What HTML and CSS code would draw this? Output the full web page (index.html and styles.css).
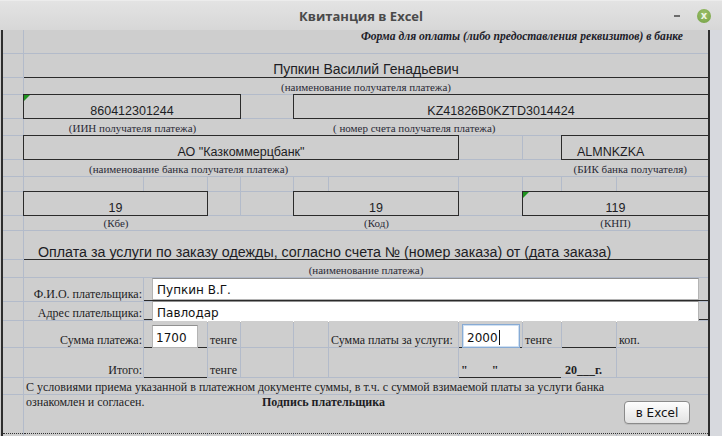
FILE: index.html
```html
<!DOCTYPE html>
<html lang="ru">
<head>
<meta charset="utf-8">
<title>Квитанция в Excel</title>
<link rel="stylesheet" href="styles.css">
</head>
<body>
<div class="window">
  <header class="titlebar">
    <span></span>
    <h1 class="title">Квитанция в Excel</h1>
    <div class="controls">
      <span class="minimize"></span>
      <span class="close">x</span>
    </div>
  </header>
  <div class="content">
    <div class="sheet">
      <!-- A -->
      <div class="c"></div>
      <div class="c s10 note">Форма для оплаты (либо предоставления реквизитов) в банке</div>
      <!-- B -->
      <div class="c"></div>
      <div class="c s10 name ul">Пупкин Василий Генадьевич</div>
      <!-- C -->
      <div class="c"></div>
      <div class="c s10 small center">(наименование получателя платежа)</div>
      <!-- D -->
      <div class="c"></div>
      <div class="c s3 box mark">860412301244</div>
      <div class="c"></div>
      <div class="c s6 box">KZ41826B0KZTD3014424</div>
      <!-- E -->
      <div class="c"></div>
      <div class="c s3 small center mr">(ИИН получателя платежа)</div>
      <div class="c s7 small acct">( номер счета получателя платежа)</div>
      <!-- F -->
      <div class="c"></div>
      <div class="c s6 box">АО "Казкоммерцбанк"</div>
      <div class="c"></div>
      <div class="c"></div>
      <div class="c s2 box bik">ALMNKZKA</div>
      <!-- G -->
      <div class="c"></div>
      <div class="c s8 small bank mr">(наименование банка получателя платежа)</div>
      <div class="c s2 small bik-label">(БИК банка получателя)</div>
      <!-- H -->
      <div class="c"></div><div class="c"></div><div class="c"></div><div class="c"></div>
      <div class="c"></div><div class="c"></div><div class="c"></div><div class="c"></div>
      <div class="c"></div><div class="c"></div><div class="c"></div>
      <!-- I -->
      <div class="c"></div>
      <div class="c s2 box">19</div>
      <div class="c"></div>
      <div class="c"></div>
      <div class="c s2 box">19</div>
      <div class="c"></div>
      <div class="c s3 box mark">119</div>
      <!-- J -->
      <div class="c"></div>
      <div class="c s2 small center mr">(Кбе)</div>
      <div class="c s2 mr"></div>
      <div class="c s2 small center mr">(Код)</div>
      <div class="c mr"></div>
      <div class="c s3 small center">(КНП)</div>
      <!-- K -->
      <div class="c"></div>
      <div class="c s10 purpose ul">Оплата за услуги по заказу одежды, согласно счета № (номер заказа) от (дата заказа)</div>
      <!-- L -->
      <div class="c"></div>
      <div class="c s10 small center">(наименование платежа)</div>
      <!-- M -->
      <div class="c"></div>
      <div class="c right">Ф.И.О. плательщика:</div>
      <div class="c s9 ul-in"><div class="field wide">Пупкин В.Г.</div></div>
      <!-- N -->
      <div class="c"></div>
      <div class="c right">Адрес плательщика:</div>
      <div class="c s9 ul-in"><div class="field wide up">Павлодар</div></div>
      <!-- O -->
      <div class="c"></div>
      <div class="c right">Сумма платежа:</div>
      <div class="c ul"><div class="field sum">1700</div></div>
      <div class="c pad">тенге</div>
      <div class="c"></div>
      <div class="c"></div>
      <div class="c pad">Сумма платы за услуги:</div>
      <div class="c ul"><div class="field fee focus">2000<span class="caret"></span></div></div>
      <div class="c pad">тенге</div>
      <div class="c ul"></div>
      <div class="c pad">коп.</div>
      <!-- P -->
      <div class="c"></div>
      <div class="c right">Итого:</div>
      <div class="c ul"></div>
      <div class="c pad">тенге</div>
      <div class="c"></div>
      <div class="c"></div>
      <div class="c"></div>
      <div class="c s2 ul bold quotes">"        "</div>
      <div class="c bold year">20___г.</div>
      <div class="c"></div>
      <!-- Q -->
      <div class="c"></div>
      <div class="c s10 pad">С условиями приема указанной в платежном документе суммы, в т.ч. с суммой взимаемой платы за услуги банка</div>
      <!-- R -->
      <div class="c dotted"></div>
      <div class="c s10 dotted agree">
        <span class="agree-text">ознакомлен и согласен.</span>
        <span class="bold">Подпись плательщика</span>
        <button class="excel" type="button">в Excel</button>
      </div>
      <!-- S -->
      <div class="c"></div><div class="c"></div><div class="c"></div><div class="c"></div>
      <div class="c"></div><div class="c"></div><div class="c"></div><div class="c"></div>
      <div class="c"></div><div class="c"></div><div class="c"></div>
    </div>
    <div class="side"></div>
  </div>
</div>
</body>
</html>
```

FILE: styles.css
```css
* { box-sizing: border-box; }

html, body {
  margin: 0;
  padding: 0;
  width: 722px;
  height: 436px;
  overflow: hidden;
  background: #cecece;
}

.window {
  display: flex;
  flex-direction: column;
  width: 722px;
  height: 436px;
}

.titlebar {
  height: 30px;
  flex: none;
  display: grid;
  grid-template-columns: 1fr auto 1fr;
  align-items: center;
  background: linear-gradient(#e3e3e3, #d7d7d7);
  border-top: 1px solid #ececec;
}

.title {
  margin: 0;
  font: 700 13px/16px "Open Sans", "DejaVu Sans", sans-serif;
  color: #4a4a4a;
}

.controls {
  justify-self: end;
  display: flex;
  align-items: center;
  gap: 17px;
  padding-right: 11px;
}

.minimize {
  width: 6px;
  height: 2px;
  background: #6b6b6b;
}

.close {
  width: 14px;
  height: 14px;
  border-radius: 50%;
  background: radial-gradient(circle at 50% 35%, #9cc06a, #74a145);
  color: #eef5e4;
  font: 700 10px/13px "DejaVu Sans", sans-serif;
  text-align: center;
}

.content {
  flex: 1;
  display: flex;
  padding-left: 1px;
  background: #cecece;
  min-height: 0;
}

.sheet {
  flex: none;
  display: grid;
  grid-template-columns: 20px 119px 63px 32px 52px 34px 129px 63px 38px 54px 91px;
  grid-template-rows: 23px 23px 16px 23px 16px 23px 16px 14px 23px 14px 28px 17px 23px 18px 26px 29px 16px 38px 3px;
  gap: 1px;
  background: #b3bbca;
  border-left: 2px solid #2e2e2e;
  border-right: 2px solid #2e2e2e;
  align-content: start;
}

.side {
  flex: 1;
  background: #d7d9de;
}

.c {
  background: #cecece;
  display: flex;
  align-items: flex-end;
  min-width: 0;
  white-space: nowrap;
  font: 12px/14px "Liberation Serif", "Times New Roman", serif;
  color: #1d1d24;
}

.s2 { grid-column: span 2; }
.s3 { grid-column: span 3; }
.s6 { grid-column: span 6; }
.s7 { grid-column: span 7; }
.s8 { grid-column: span 8; }
.s9 { grid-column: span 9; }
.s10 { grid-column: span 10; }

.mr { margin-right: -1px; }

.small {
  font-size: 11px;
  line-height: 13px;
  color: #2a2a36;
}

.center { justify-content: center; }
.right { justify-content: flex-end; padding-right: 1px; }
.pad { padding-left: 2px; }
.bold { font-weight: 700; }

.note {
  align-items: flex-start;
  justify-content: flex-end;
  padding-right: 25px;
  font: italic 700 11.6px/13px "Liberation Serif", serif;
  color: #202028;
}

.name {
  justify-content: center;
  font: 14px/15px "Liberation Sans", Arial, sans-serif;
}

.ul {
  margin-bottom: -1px;
  border-bottom: 1px solid #2b2b2b;
}

.ul-in {
  border-bottom: 1px solid #2b2b2b;
}

.box {
  position: relative;
  margin: -1px;
  border: 1px solid #2b2b2b;
  justify-content: center;
  font: 12.5px/14px "Liberation Sans", Arial, sans-serif;
}

.mark::before {
  content: "";
  position: absolute;
  left: 0;
  top: 0;
  border-top: 6px solid #1f931f;
  border-right: 6px solid transparent;
}

.bik {
  justify-content: flex-start;
  padding-left: 15px;
}

.acct { padding-left: 92px; }
.bank { padding-left: 65px; }
.bik-label { justify-content: flex-end; padding-right: 21px; }

.purpose {
  padding-left: 14px;
  font: 14.25px/14px "Liberation Sans", Arial, sans-serif;
}

.field {
  align-self: flex-start;
  height: 22px;
  padding: 4px 4px 0;
  background: #fff;
  border: 1px solid #b4b4b4;
  border-top-color: #909090;
  font: 12px/14px "DejaVu Sans", sans-serif;
  color: #111;
  display: flex;
}

.wide {
  flex: 1;
  margin-left: 8px;
  margin-right: 9px;
}

.up { margin-top: -1px; }

.sum {
  width: 46px;
  height: 23px;
  margin-left: 8px;
  margin-top: 4px;
  padding-left: 3px;
  padding-top: 5px;
}

.fee {
  width: 58px;
  height: 24px;
  margin-left: 3px;
  margin-top: 3px;
  padding-top: 6px;
}

.focus {
  border: 1px solid #88abd4;
  box-shadow: inset 0 0 0 1px #cfe0f2;
}

.caret {
  width: 1px;
  height: 15px;
  margin-top: -1px;
  margin-left: 1px;
  background: #111;
}

.quotes {
  white-space: pre;
  padding-left: 2px;
}

.year {
  margin-left: -1px;
  padding-left: 4px;
}

.dotted {
  margin-bottom: -1px;
  border-bottom: 1px dotted #333;
}

.agree {
  align-items: flex-start;
  padding-left: 2px;
}

.agree-text { width: 236px; }

.excel {
  margin: 6px 18px 0 auto;
  width: 66px;
  height: 23px;
  padding: 0;
  border: 1px solid #8a8a8a;
  border-radius: 4px;
  background: linear-gradient(#fdfdfd, #e2e2e2);
  box-shadow: 0 1px 0 rgba(0,0,0,0.08);
  font: 12px/14px "DejaVu Sans", sans-serif;
  color: #111;
}
```
